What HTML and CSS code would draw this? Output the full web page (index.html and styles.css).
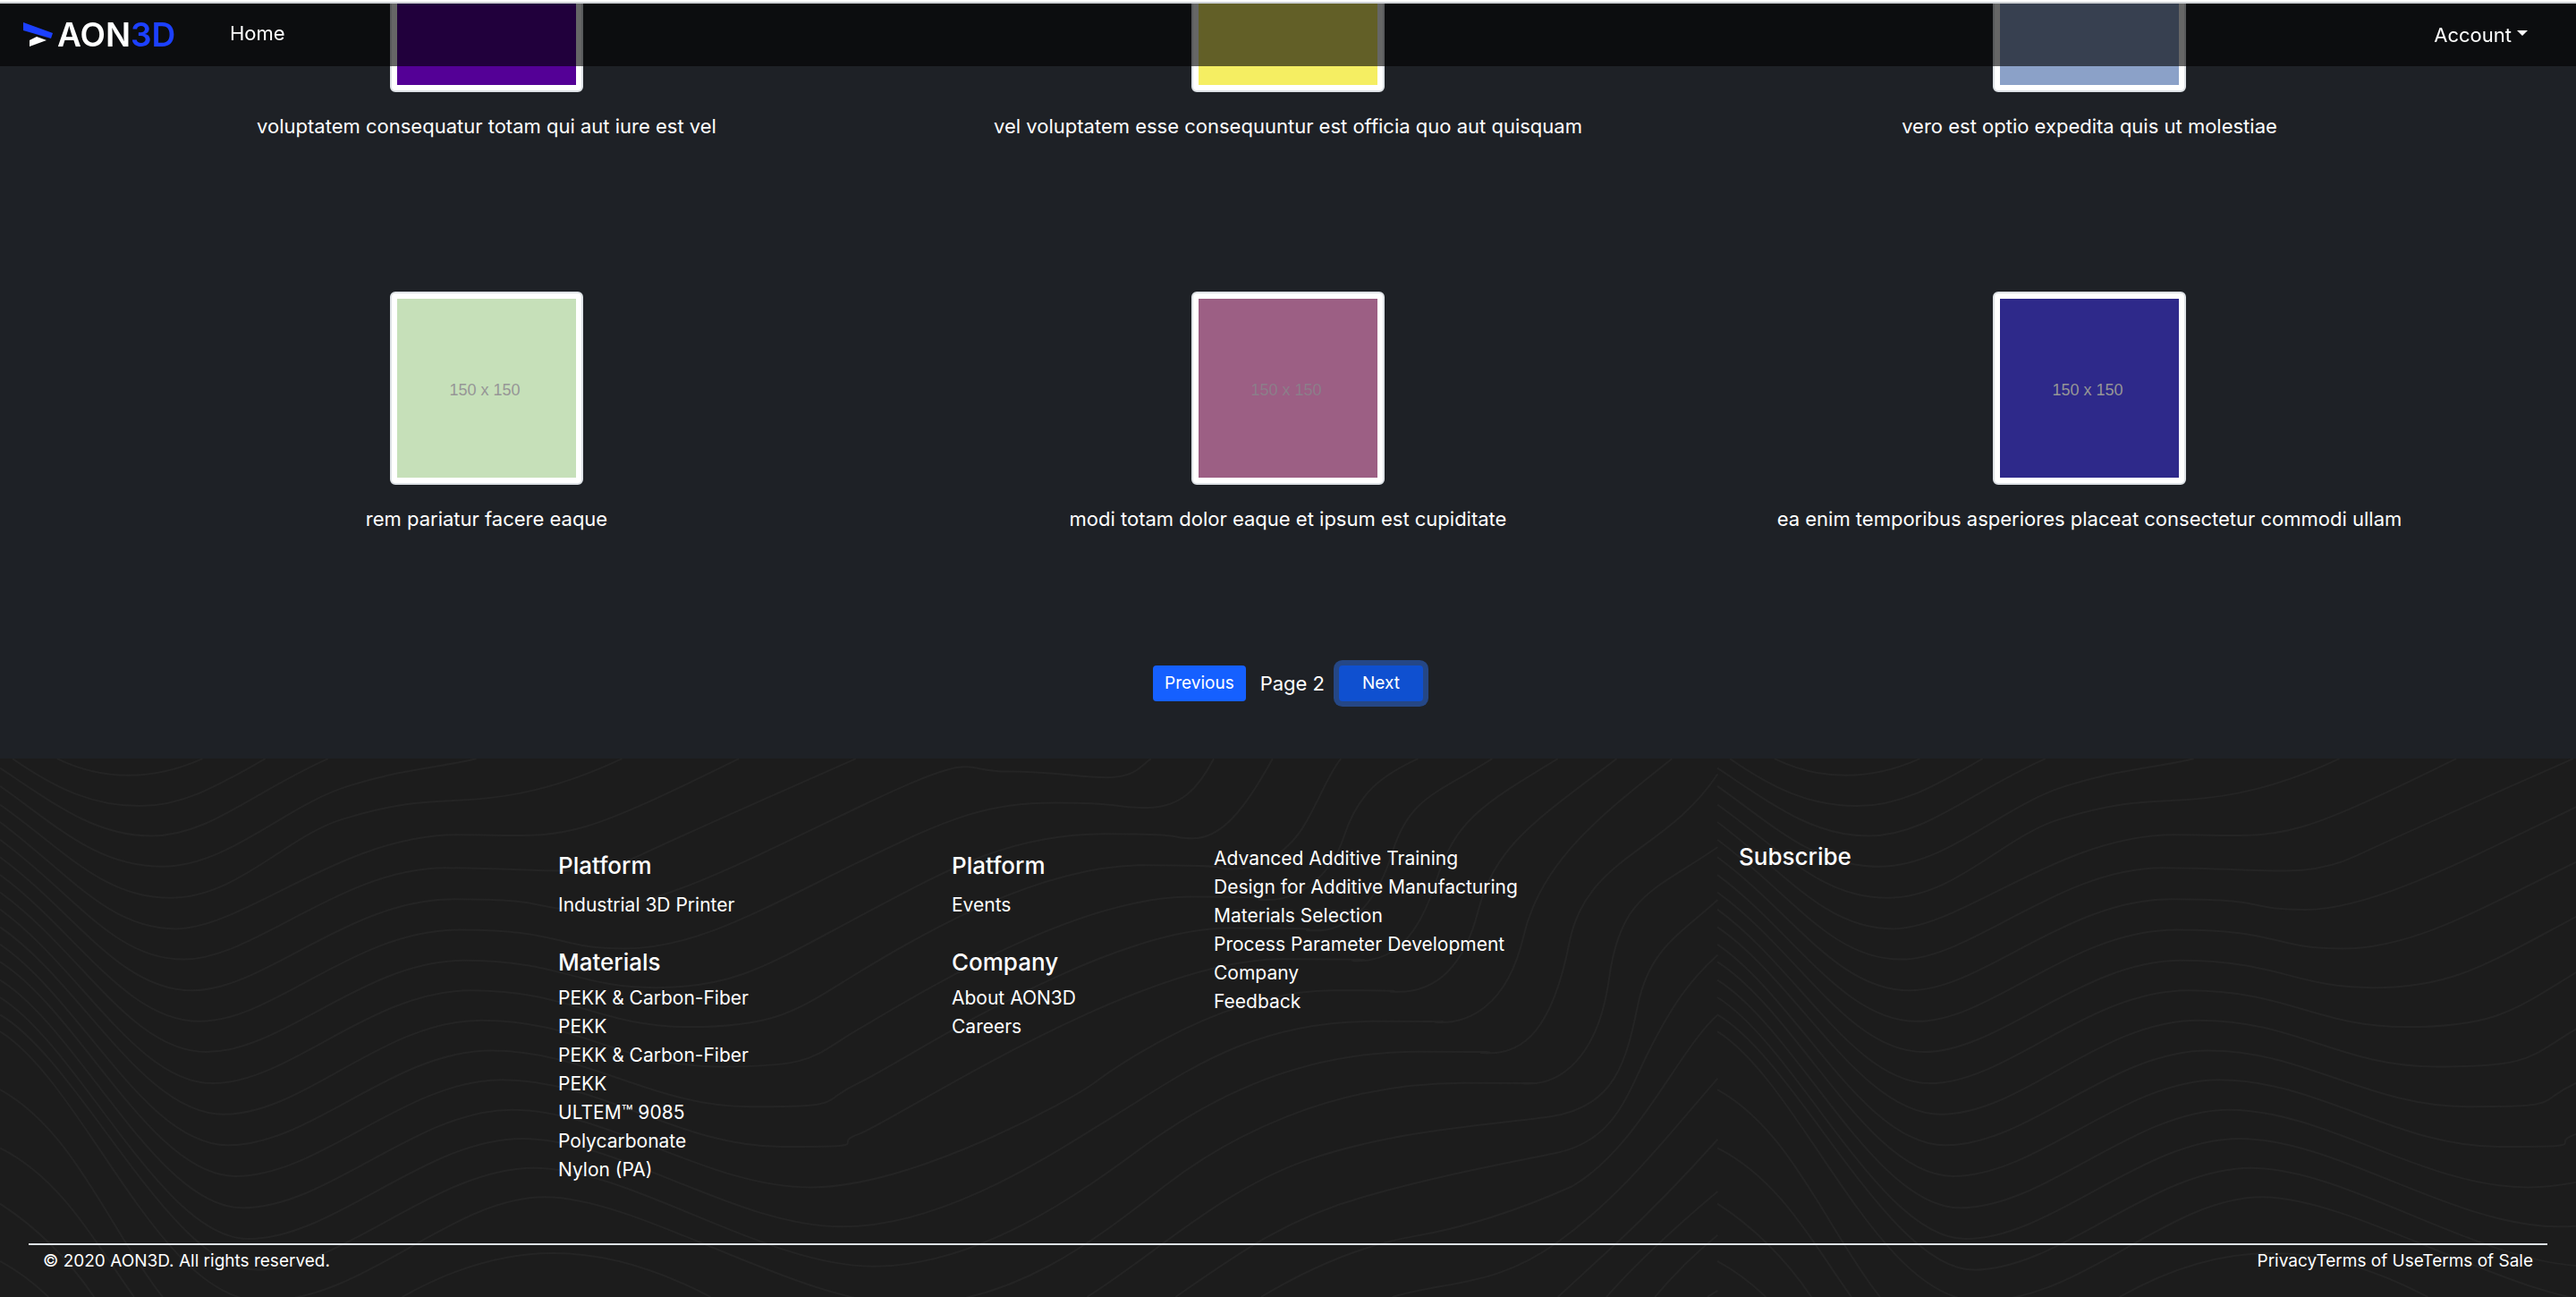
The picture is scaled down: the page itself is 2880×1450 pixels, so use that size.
FILE: index.html
```html
<!DOCTYPE html>
<html lang="en">
<head>
<meta charset="utf-8">
<title>AON3D</title>
<link rel="stylesheet" href="styles.css">
</head>
<body>
<header class="navbar">
  <a class="brand" href="#" aria-label="AON3D home">
    <svg class="brand-mark" viewBox="0 0 34 28" aria-hidden="true"><path class="mark-blue" d="M0 0L33 12L31 18L0 9Z"/><path class="mark-white" d="M7 27V20L15 16L26 20Z"/></svg>
    <span class="brand-name">AON<span class="brand-accent">3D</span></span>
  </a>
  <nav class="nav-main"><a href="#">Home</a></nav>
  <button class="account" type="button">Account</button>
</header>

<main class="gallery">
  <div class="grid">
    <figure class="card"><div class="thumb purple"><span>150 x 150</span></div><figcaption>voluptatem consequatur totam qui aut iure est vel</figcaption></figure>
    <figure class="card"><div class="thumb yellow"><span>150 x 150</span></div><figcaption>vel voluptatem esse consequuntur est officia quo aut quisquam</figcaption></figure>
    <figure class="card"><div class="thumb sky"><span>150 x 150</span></div><figcaption>vero est optio expedita quis ut molestiae</figcaption></figure>
    <figure class="card"><div class="thumb green"><span>150 x 150</span></div><figcaption>rem pariatur facere eaque</figcaption></figure>
    <figure class="card"><div class="thumb mauve"><span>150 x 150</span></div><figcaption>modi totam dolor eaque et ipsum est cupiditate</figcaption></figure>
    <figure class="card"><div class="thumb indigo"><span>150 x 150</span></div><figcaption>ea enim temporibus asperiores placeat consectetur commodi ullam</figcaption></figure>
  </div>
  <div class="pager">
    <button class="btn" type="button">Previous</button>
    <span>Page 2</span>
    <button class="btn btn-active" type="button">Next</button>
  </div>
</main>

<footer class="footer">
  <svg class="contours" aria-hidden="true">
    <defs>
      <g id="tile" transform="translate(0 -8) scale(.638 .389)">
        <path d="M100 21Q160 69 225 69T355 21"/>
        <path d="M22 21C100 110 165 157 245 157S390 90 465 21"/>
        <path d="M0 48C90 145 165 243 265 243S440 120 575 21"/>
        <path d="M0 100C100 215 170 331 285 331S500 155 610 100S760 50 835 21"/>
        <path d="M0 153C110 280 180 421 298 421S500 245 600 195S750 145 800 141S950 130 1090 21"/>
        <path d="M0 203C120 350 190 510 308 510S600 240 800 240S980 275 1295 21"/>
        <path d="M0 254C130 410 200 598 322 598S600 335 780 335S1030 370 1120 300S1350 130 1500 21"/>
        <path d="M0 304C130 460 210 687 337 687S610 425 795 425S920 455 1030 455S1290 330 1505 160S1680 58 1765 58S1890 75 1940 75S2000 40 2017 21"/>
        <path d="M0 355C130 510 220 776 350 776S620 513 805 513S970 567 1095 567S1340 450 1505 318S1730 148 1850 148S1950 162 2010 162S2100 105 2127 21"/>
        <path d="M0 405C140 570 230 864 362 864S640 601 812 601S1010 679 1150 679S1350 610 1505 475S1770 237 1935 237S2040 250 2090 250S2180 170 2230 21"/>
        <path d="M0 454C140 620 240 954 373 954S650 687 825 687S1050 792 1208 792S1400 740 1505 635S1820 327 2005 327S2110 338 2160 338S2260 290 2290 200S2330 60 2350 21"/>
        <path d="M0 505C140 660 250 1043 392 1043S670 773 843 773S1090 906 1260 906S1420 880 1505 798S1880 418 2085 418S2170 427 2220 427S2330 370 2355 245S2420 70 2485 21"/>
        <path d="M0 555C140 710 255 1132 400 1132S690 860 860 860S1140 1021 1315 1021S1430 1010 1505 953S1930 508 2155 508S2250 515 2305 515S2410 450 2440 290S2520 120 2615 21"/>
        <path d="M0 605C140 750 265 1221 413 1221S710 944 880 944S1190 1136 1370 1136S1450 1130 1505 1100S1990 597 2245 597S2330 602 2380 602S2480 560 2515 380S2590 160 2730 21"/>
        <path d="M0 657C140 800 275 1312 425 1312S730 1030 897 1030S1240 1253 1420 1253S1880 1000 1920 950S2150 687 2335 687S2400 691 2450 691S2560 650 2590 460S2690 200 2833 21"/>
        <path d="M0 707C140 850 285 1401 435 1401S745 1113 915 1113S1290 1366 1475 1366S1850 1150 1960 1040S2190 776 2405 776S2480 779 2525 779S2640 740 2670 530S2800 190 2930 21"/>
        <path d="M0 757C140 890 300 1490 450 1490S765 1197 935 1197S1340 1480 1530 1480S1900 1260 2000 1140S2260 863 2485 863S2550 867 2610 867S2720 800 2750 550S2920 290 3010 65"/>
        <path d="M0 805C150 960 280 1580 460 1580S790 1281 955 1281S1400 1590 1590 1590S1930 1390 2040 1250S2330 953 2565 953S2630 955 2680 955S2800 890 2820 650S2900 400 3010 275"/>
        <path d="M0 972C130 1090 190 1370 285 1568M705 1568Q840 1442 970 1442T1245 1568M1905 1568C2020 1450 2140 1260 2290 1175S2600 1075 2715 1050S2850 890 2870 730S2940 530 3010 427"/>
        <path d="M0 1140C110 1230 170 1420 235 1568M2060 1568C2180 1430 2260 1340 2390 1280S2620 1190 2725 1155S2850 990 2890 860S2960 660 3010 585"/>
        <path d="M0 1300Q95 1400 165 1568M2210 1568Q2350 1430 2480 1393T2755 1250C2870 1140 2940 860 3010 757"/>
        <path d="M0 1465Q45 1505 85 1568M2440 1568C2540 1520 2620 1540 2730 1410S2920 1110 3010 940"/>
        <path d="M2730 1568L2835 1410Q2920 1280 3010 1115M2815 1568Q2890 1430 3010 1265M2900 1568Q2950 1470 3010 1390M2992 1568L3010 1550"/>
      </g>
    </defs>
    <use href="#tile"/><use href="#tile" x="1920"/>
  </svg>
  <div class="footer-columns">
    <div class="col col-products">
      <h2>Platform</h2>
      <ul class="solo"><li><a href="#">Industrial 3D Printer</a></li></ul>
      <h2>Materials</h2>
      <ul>
        <li><a href="#">PEKK &amp; Carbon-Fiber</a></li>
        <li><a href="#">PEKK</a></li>
        <li><a href="#">PEKK &amp; Carbon-Fiber</a></li>
        <li><a href="#">PEKK</a></li>
        <li><a href="#">ULTEM™ 9085</a></li>
        <li><a href="#">Polycarbonate</a></li>
        <li><a href="#">Nylon (PA)</a></li>
      </ul>
    </div>
    <div class="col col-company">
      <h2>Platform</h2>
      <ul class="solo"><li><a href="#">Events</a></li></ul>
      <h2>Company</h2>
      <ul>
        <li><a href="#">About AON3D</a></li>
        <li><a href="#">Careers</a></li>
      </ul>
    </div>
    <div class="col col-training">
      <ul>
        <li><a href="#">Advanced Additive Training</a></li>
        <li><a href="#">Design for Additive Manufacturing</a></li>
        <li><a href="#">Materials Selection</a></li>
        <li><a href="#">Process Parameter Development</a></li>
        <li><a href="#">Company</a></li>
        <li><a href="#">Feedback</a></li>
      </ul>
    </div>
    <div class="col col-subscribe"><h2>Subscribe</h2></div>
  </div>
  <div class="legal">
    <span>© 2020 AON3D. All rights reserved.</span>
    <nav><a href="#">Privacy</a><a href="#">Terms of Use</a><a href="#">Terms of Sale</a></nav>
  </div>
</footer>
</body>
</html>
```
FILE: styles.css
```css
* { box-sizing: border-box; }
body {
  display: flex;
  flex-direction: column;
  min-height: 100vh;
  margin: 0;
  background: #1e2126;
  color: #fff;
  font-family: Inter, "Liberation Sans", sans-serif;
  font-size: 22px;
  line-height: 32px;
}
a { color: inherit; text-decoration: none; }
button { font: inherit; color: inherit; border: 0; cursor: pointer; }
h2, ul, figure { margin: 0; padding: 0; }
ul { list-style: none; }

.navbar {
  position: fixed;
  inset: 0 0 auto;
  z-index: 2;
  display: flex;
  align-items: center;
  height: 74px;
  padding: 4px 54px 0 26px;
  background: rgba(0, 0, 0, .6);
  box-shadow: inset 0 2px #fff, inset 0 4px #cfd2d6;
}
.brand { display: flex; align-items: center; gap: 4px; width: 231px; }
.brand-mark { width: 34px; height: 28px; }
.mark-blue { fill: #1c40ff; }
.mark-white { fill: #fff; }
.brand-name { font-size: 37px; font-weight: 600; line-height: 40px; }
.brand-accent { color: #1c40ff; }
.nav-main { flex: 1; padding-bottom: 4px; }
.account { display: flex; align-items: center; gap: 6px; padding: 0; background: none; }
.account::after { content: ""; margin-bottom: 4px; border: 6px solid transparent; border-top-color: #fff; border-bottom: 0; }

.gallery { flex: none; overflow: hidden; padding-bottom: 64px; }
.grid {
  display: grid;
  grid-template-columns: repeat(3, 1fr);
  row-gap: 169px;
  margin-top: -113px;
  padding: 0 96px;
}
.card { display: flex; flex-direction: column; align-items: center; gap: 22px; }
.thumb {
  display: flex;
  align-items: center;
  justify-content: center;
  width: 216px;
  height: 216px;
  padding: 6px;
  border: 2px solid #dee2e6;
  border-radius: 6px;
  color: #969696;
  font: 18px/24px "Liberation Sans", sans-serif;
}
.thumb span { padding: 4px 4px 0 0; }
.purple { background: linear-gradient(#540096, #540096) content-box, #fff; }
.yellow { background: linear-gradient(#f5ee62, #f5ee62) content-box, #fff; }
.sky { background: linear-gradient(#8ba1c8, #8ba1c8) content-box, #fff; }
.green { background: linear-gradient(#c6e0b9, #c6e0b9) content-box, #fff; }
.mauve { background: linear-gradient(#9c5f84, #9c5f84) content-box, #fff; color: #8c7e8a; }
.indigo { background: linear-gradient(#2e298a, #2e298a) content-box, #fff; }

.pager { display: flex; align-items: center; justify-content: center; gap: 16px; margin-top: 148px; }
.btn {
  height: 40px;
  padding: 0 13px;
  border-radius: 4px;
  background: #1560ff;
  font-size: 19px;
}
.btn-active { padding: 0 26px; background: #0f50d0; box-shadow: 0 0 0 6px #254786; }

.footer { position: relative; flex: 1; overflow: hidden; padding: 94px 32px 16px; background: #1c1c1c; }
.contours { position: absolute; inset: 0; width: 100%; height: 100%; fill: none; stroke: #242424; stroke-width: 2px; }
.contours path { vector-effect: non-scaling-stroke; }
.footer-columns {
  position: relative;
  display: grid;
  grid-template-columns: 440px 293px 587px 1fr;
  padding-left: 592px;
  font-size: 21px;
}
.col h2 { font-size: 26px; font-weight: 500; line-height: 32px; margin: 8px 0; }
.col-products, .col-company, .col-training { padding-top: 2px; }
.solo { padding: 4px 0 24px; }
.col-subscribe h2 { margin-top: 0; }
.legal {
  position: relative;
  display: flex;
  justify-content: space-between;
  margin-top: 66px;
  padding: 2px 16px 0;
  border-top: 2px solid #dee2e6;
  font-size: 19px;
}
```
